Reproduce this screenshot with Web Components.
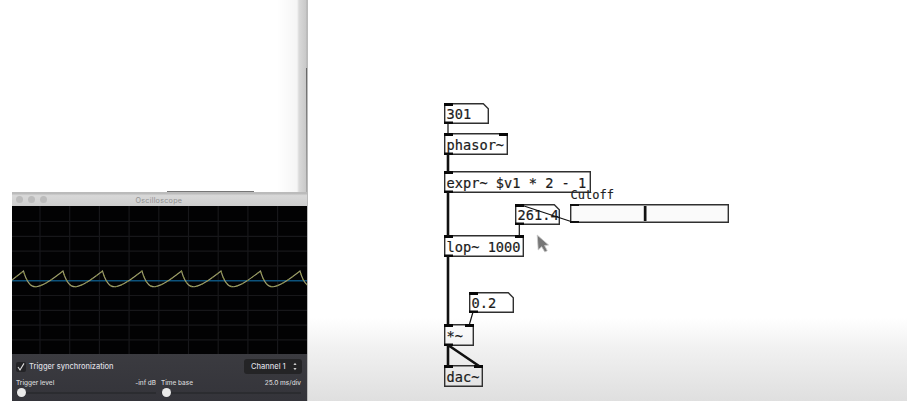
<!DOCTYPE html>
<html lang="en"><head><meta charset="utf-8"><title>Patch and oscilloscope</title>
<style>html,body{margin:0;height:100%;overflow:hidden;background:#fff}</style></head>
<body><app-desktop></app-desktop>
<script>
class Base extends HTMLElement{
  constructor(){super();this.attachShadow({mode:'open'});}
  paint(h){this.shadowRoot.innerHTML=h;}
}
customElements.define('scope-screen',class extends Base{
  connectedCallback(){
    let grid='',wave='M-1 74.8 L11.5 65';
    for(let i=0;i<9;i++)grid+=`<path d="M${28+i*29.7} 0V148"/>`;
    for(let i=0;i<9;i++)if(i!==4)grid+=`<path d="M0 ${15.5+i*14.8}H295"/>`;
    for(let i=0;i<8;i++){const x=11.5+i*39.5;
      wave+=` C${x+2.2} 73 ${x+6} 81.5 ${x+13} 80.7 C${x+20} 80 ${x+29} 73 ${x+39.5} 65`;}
    this.paint(`<style>:host{display:block;height:148px;background:#020203;overflow:hidden}svg{display:block}</style>
    <svg width="295" height="148"><g stroke="#17171a" stroke-width="1.2">${grid}</g>
    <path d="M0 74.7H295" stroke="#0c527c" stroke-width="1.5"/>
    <path d="${wave}" fill="none" stroke="#a09f74" stroke-width="1.1"/>
    <path d="${wave}" fill="none" stroke="#808a34" stroke-width="1" stroke-dasharray="2 4"/></svg>`);
  }});
customElements.define('scope-title',class extends Base{
  connectedCallback(){this.paint(`<style>:host{display:flex;align-items:center;height:13px;background:linear-gradient(#b4b4b4,#d8d8d8 20%,#cecece);box-sizing:border-box;padding-left:4px;gap:5px;font:7.2px/13px Inter,sans-serif;color:#909090}
  i{width:7px;height:7px;border-radius:50%;background:#bcbcbc}span{margin-left:83.5px;padding-top:1px;letter-spacing:.25px}</style><i></i><i></i><i></i><span><slot></slot></span>`)}});
customElements.define('range-knob',class extends Base{
  connectedCallback(){this.paint(`<style>:host{display:flex;flex:1;align-items:center;height:9px;padding-left:.5px;background:linear-gradient(#0000 4px,#2b2c30 4px 6px,#0000 6px)}i{width:9px;height:9px;border-radius:50%;background:#e9e9e9}</style><i></i>`)}});
customElements.define('labelled-range',class extends Base{
  connectedCallback(){this.paint(`<style>:host{display:block;width:var(--w)}div{display:flex;justify-content:space-between;height:9px;line-height:9px}</style><div><slot name="label"></slot><slot name="value"></slot></div><range-knob></range-knob>`)}});
customElements.define('scope-controls',class extends Base{
  connectedCallback(){this.paint(`<style>:host{display:block;height:47px;box-sizing:border-box;padding:4px 6px 0 4px;background:linear-gradient(#3b3b40,#34343a);font:6.45px/9px Inter,sans-serif;font-weight:500;color:#d4d4d6}
  .top{display:flex;align-items:center;height:17px;color:#dddde0}.check{width:10px;height:10px;border-radius:2px;background:#232326}.sync{margin-left:3px;flex:1;font-size:7.45px}
  .channel{display:flex;align-items:center;box-sizing:border-box;width:58px;height:15px;margin-right:-1px;padding:0 5px 0 7px;background:#242426;border-radius:3px;justify-content:space-between;white-space:nowrap;font-size:7.5px}
  .ranges{display:flex;padding-top:4px;gap:5px}</style>
  <div class="top"><svg class="check" viewBox="0 0 10 10"><path d="M2 5L4 8L8 1.4" fill="none" stroke="#ddd" stroke-width="1.1"/></svg><span class="sync">Trigger synchronization</span>
  <div class="channel"><span>Channel 1</span><svg width="4" height="9" viewBox="0 0 4 9"><path d="M.4 3L2 .7L3.6 3ZM.4 6L2 8.3L3.6 6Z" fill="#ccc"/></svg></div></div>
  <div class="ranges"><labelled-range style="--w:140px"><span slot="label">Trigger level</span><span slot="value">-inf dB</span></labelled-range>
  <labelled-range style="--w:140px"><span slot="label">Time base</span><span slot="value">25.0 ms/div</span></labelled-range></div>`)}});
customElements.define('scope-column',class extends Base{
  connectedCallback(){this.paint(`<style>:host{display:flex;flex-direction:column;width:295px;height:401px;flex:none}
  .blank{height:193px;box-sizing:border-box;border-bottom:1px solid #bbb;background:linear-gradient(90deg,#fff 265px,#f5f5f5 285px,#d9d9d9 287px,#c9c9c9 294px,#b0b0b0);display:flex;align-items:flex-end}
  .edge{width:87px;height:1px;margin-left:155px;background:#777}.side{width:1px;height:124px;margin-left:52px;background:linear-gradient(#666,#aaa)}</style>
  <div class="blank"><div class="edge"></div><div class="side"></div></div><scope-title>Oscilloscope</scope-title><scope-screen></scope-screen><scope-controls></scope-controls>`)}});
/* Patch object: a box or a notched number box, with inlets above and outlets below. */
customElements.define('pd-node',class extends Base{
  connectedCallback(){
    const g=k=>+this.getAttribute(k),w=g('w'),h=g('h'),n=this.hasAttribute('number');
    const d=n?`M.7 .7H${w-5.7}L${w-.7} 5.7V${h-.7}H.7Z`:`M.7 .7H${w-.7}V${h-.7}H.7Z`;
    this.paint(`<style>:host{display:block;position:absolute;left:${g('x')-307}px;top:${g('y')}px;width:${w}px;height:${h}px;font:13.65px/${h}px "DejaVu Sans Mono",monospace;color:#1b1b1b;-webkit-text-stroke:.2px #1b1b1b}
    svg{position:absolute;inset:0;overflow:visible}span{display:block;position:relative;padding-left:2.6px;white-space:pre;top:1px}</style>
    <svg width="${w}" height="${h}"><path d="${d}" fill="none" stroke="#303030" stroke-width="1.4"/>
    <g fill="#080808"><path d="M0 0H9V3H0Z"/>${this.hasAttribute('two')?`<path d="M${w-9} 0H${w}V3H${w-9}Z"/>`:''}${this.hasAttribute('sink')?'':`<path d="M0 ${h-2.5}H9V${h}H0Z"/>`}</g></svg><span><slot></slot></span>`)}});
customElements.define('pd-slider',class extends Base{
  connectedCallback(){this.paint(`<style>:host{position:absolute;left:263px;top:188px;width:159px;height:35px;font:12px/14px "DejaVu Sans Mono",monospace;color:#222}span{display:block;height:16px;padding-left:.6px;-webkit-text-stroke:.15px #222}svg{display:block}</style>
  <span><slot></slot></span><svg width="159" height="19"><path d="M.7 .7H158.3V18.3H.7Z" fill="#fafafa" stroke="#303030" stroke-width="1.4"/><path d="M0 0H9V2H0ZM0 17H9V19H0ZM73.8 2H76.5V17H73.8Z" fill="#111"/></svg>`)}});
customElements.define('pd-canvas',class extends Base{
  connectedCallback(){this.paint(`<style>:host{display:block;position:relative;flex:1;height:401px;overflow:hidden;background:linear-gradient(#fff 318px,#f1f1f1 348px,#dfdfdf 401px);box-shadow:inset 1px 0 #bbb}.wires{position:absolute;inset:0}.pointer{position:absolute;left:229px;top:234px}</style>
  <pd-node x="444" y="103" w="45" h="21" number>301</pd-node>
  <pd-node x="444" y="133" w="64" h="22" two>phasor~</pd-node>
  <pd-node x="444" y="171" w="147" h="22">expr~ $v1 * 2 - 1</pd-node>
  <pd-slider>Cutoff</pd-slider>
  <pd-node x="515" y="204" w="45" h="21" number>261.4</pd-node>
  <pd-node x="444" y="235" w="80" h="22" two>lop~ 1000</pd-node>
  <pd-node x="469" y="292" w="45" h="21" number>0.2</pd-node>
  <pd-node x="444" y="323.5" w="30" h="22" two>*~</pd-node>
  <pd-node x="444" y="365" w="39" h="22" two sink>dac~</pd-node>
  <svg class="wires" width="600" height="401" viewBox="307 0 600 401" fill="none" stroke="#111"><path d="M448 123V134M519.3 225V236M473 312L469.5 324M519.5 204.5L574 222.5" stroke-width="1.2"/><path d="M448 154V172M448 192V236M448 256V324M448 345V366M448 345L479 366" stroke-width="2.6"/></svg>
  <svg class="pointer" width="18" height="20" viewBox="0 0 18 20"><path d="M1.2 1L2.2 16L5.6 12.7L8.8 18L11.3 16.7L8.6 11.5L12.6 11Z" fill="#777" stroke="#ccc" stroke-width=".8"/></svg>`)}});
customElements.define('app-desktop',class extends Base{
  connectedCallback(){this.paint(`<style>:host{display:flex;box-sizing:border-box;width:907px;height:401px;padding-left:12px;background:#fff;overflow:hidden}</style><scope-column></scope-column><pd-canvas></pd-canvas>`)}});
</script></body></html>
